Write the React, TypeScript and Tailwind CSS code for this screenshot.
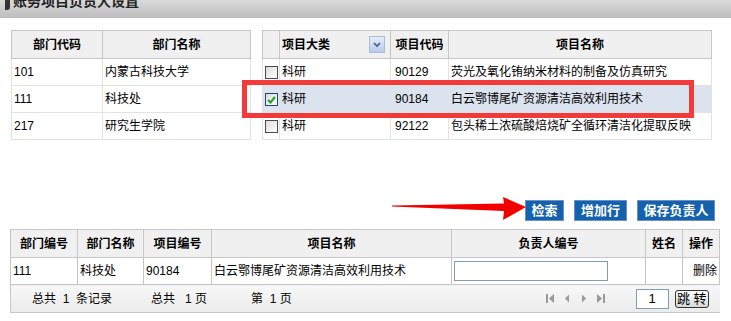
import React from "react"

const font = { fontFamily: '"Liberation Sans", "Noto Sans CJK SC", sans-serif' }

const Checkbox = ({ checked }: { checked?: boolean }) => (
  <span
    className={
      "inline-flex w-[13px] h-[13px] items-center justify-center border bg-gradient-to-br from-[#dcdcdc] to-white align-middle " +
      (checked ? "border-[#1c4a72]" : "border-[#4a4a4a]")
    }
  >
    {checked && (
      <svg width="9" height="8" viewBox="0 0 9 8">
        <path d="M1 4 L3.5 6.5 L8 1" stroke="#21a121" strokeWidth="2" fill="none" />
      </svg>
    )}
  </span>
)

const NavIcon = ({ kind }: { kind: "first" | "prev" | "next" | "last" }) => (
  <svg width="8" height="9" viewBox="0 0 8 9" className="text-[#9a9a9a]">
    {kind === "first" && (
      <>
        <rect x="0" y="0" width="2" height="9" fill="currentColor" />
        <path d="M8 0 L3 4.5 L8 9 Z" fill="currentColor" />
      </>
    )}
    {kind === "prev" && <path d="M6 0.5 L2 4.5 L6 8.5 Z" fill="currentColor" />}
    {kind === "next" && <path d="M2 0.5 L6 4.5 L2 8.5 Z" fill="currentColor" />}
    {kind === "last" && (
      <>
        <path d="M0 0 L5 4.5 L0 9 Z" fill="currentColor" />
        <rect x="6" y="0" width="2" height="9" fill="currentColor" />
      </>
    )}
  </svg>
)

const deptRows = [
  ["101", "内蒙古科技大学"],
  ["111", "科技处"],
  ["217", "研究生学院"],
]

const projRows = [
  { type: "科研", code: "90129", name: "荧光及氧化铕纳米材料的制备及仿真研究", checked: false },
  { type: "科研", code: "90184", name: "白云鄂博尾矿资源清洁高效利用技术", checked: true },
  { type: "科研", code: "92122", name: "包头稀土浓硫酸焙烧矿全循环清洁化提取反映", checked: false },
]

const th = "border border-[#c6c6c6] bg-[#f0f0f0] font-bold text-center px-[2px]"
const td = "border border-[#e2e2e2] px-[2px] whitespace-nowrap overflow-hidden"
const tdB = "border border-[#c6c6c6] px-[2px] whitespace-nowrap overflow-hidden"

export default function App() {
  return (
    <div className="relative w-[731px] h-[321px] bg-white text-[12px] text-black overflow-hidden" style={font}>
      {/* title bar, scrolled so the text is cut off */}
      <div className="h-[18px] bg-gradient-to-b from-[#dadada] to-[#bdbdbd] overflow-hidden flex items-start pl-[5px]">
        <div className="flex items-center gap-[3px] -mt-[9px]">
          <span className="w-[5px] h-[12px] bg-[#333] rounded-r-[3px] mt-[4px]" />
          <span className="text-[14px] font-bold text-[#222]">账务项目负责人设置</span>
        </div>
      </div>

      {/* top tables */}
      <div className="flex items-start gap-[11px] mt-[12px] pl-[11px]">
        <table className="border-collapse table-fixed w-[239px]">
          <colgroup>
            <col className="w-[91px]" />
            <col className="w-[148px]" />
          </colgroup>
          <thead>
            <tr className="h-[28px]">
              <th className={th}>部门代码</th>
              <th className={th}>部门名称</th>
            </tr>
          </thead>
          <tbody>
            {deptRows.map(r => (
              <tr key={r[0]} className="h-[27px]">
                <td className={td}>{r[0]}</td>
                <td className={td}>{r[1]}</td>
              </tr>
            ))}
          </tbody>
        </table>

        <table className="border-collapse table-fixed w-[449px]">
          <colgroup>
            <col className="w-[17px]" />
            <col className="w-[111px]" />
            <col className="w-[58px]" />
            <col className="w-[263px]" />
          </colgroup>
          <thead>
            <tr className="h-[28px]">
              <th className={th}></th>
              <th className={th + " text-left"}>
                <div className="flex items-center justify-between pr-[3px]">
                  <span>项目大类</span>
                  <span className="w-[16px] h-[17px] border border-[#a9bcd6] bg-gradient-to-b from-[#e4ecf8] to-[#b9cbea] flex items-center justify-center">
                    <svg width="8" height="6" viewBox="0 0 8 6">
                      <path d="M1 1 L4 4 L7 1" stroke="#3b5c8c" strokeWidth="1.6" fill="none" />
                    </svg>
                  </span>
                </div>
              </th>
              <th className={th}>项目代码</th>
              <th className={th}>项目名称</th>
            </tr>
          </thead>
          <tbody>
            {projRows.map(r => (
              <tr key={r.code} className={"h-[27px] " + (r.checked ? "bg-[#dbe3ee]" : "")}>
                <td className={td + " px-0 text-center"}>
                  <Checkbox checked={r.checked} />
                </td>
                <td className={td}>{r.type}</td>
                <td className={td + " pl-[4px]"}>{r.code}</td>
                <td className={td}>{r.name}</td>
              </tr>
            ))}
          </tbody>
        </table>
      </div>

      {/* buttons row */}
      <div className="flex justify-end items-center gap-[10px] mt-[60px] pr-[16px]">
        <button className="w-[39px] h-[21px] bg-[#1462ad] border border-[#6d8fc4] text-white font-bold text-[13px] leading-none">检索</button>
        <button className="w-[53px] h-[21px] bg-[#1462ad] border border-[#6d8fc4] text-white font-bold text-[13px] leading-none">增加行</button>
        <button className="w-[78px] h-[21px] bg-[#1462ad] border border-[#6d8fc4] text-white font-bold text-[13px] leading-none">保存负责人</button>
      </div>

      {/* bottom table */}
      <div className="pl-[10px] mt-[8px]">
        <table className="border-collapse table-fixed w-[709px]">
          <colgroup>
            <col className="w-[67px]" />
            <col className="w-[66px]" />
            <col className="w-[68px]" />
            <col className="w-[240px]" />
            <col className="w-[194px]" />
            <col className="w-[37px]" />
            <col className="w-[37px]" />
          </colgroup>
          <thead>
            <tr className="h-[28px]">
              <th className={th}>部门编号</th>
              <th className={th}>部门名称</th>
              <th className={th}>项目编号</th>
              <th className={th}>项目名称</th>
              <th className={th}>负责人编号</th>
              <th className={th}>姓名</th>
              <th className={th}>操作</th>
            </tr>
          </thead>
          <tbody>
            <tr className="h-[27px]">
              <td className={tdB}>111</td>
              <td className={tdB}>科技处</td>
              <td className={tdB}>90184</td>
              <td className={tdB}>白云鄂博尾矿资源清洁高效利用技术</td>
              <td className={tdB}>
                <input className="block w-[154px] h-[20px] border border-[#7f9db9] bg-white outline-none" />
              </td>
              <td className={tdB}></td>
              <td className={tdB + " text-right"}>删除</td>
            </tr>
            <tr className="h-[28px]">
              <td colSpan={7} className="border border-[#c6c6c6] border-r-0 bg-gradient-to-b from-[#f8f8f8] to-[#ebebeb] p-0">
                <div className="flex items-center h-[27px] whitespace-pre">
                  <span className="ml-[21px] w-[119px]">总共  1  条记录</span>
                  <span className="w-[100px]">总共   1 页</span>
                  <span>第  1 页</span>
                  <div className="flex items-center gap-[9px] ml-[254px]">
                    <NavIcon kind="first" />
                    <NavIcon kind="prev" />
                    <NavIcon kind="next" />
                    <NavIcon kind="last" />
                  </div>
                  <input
                    readOnly
                    value="1"
                    className="ml-[31px] w-[33px] h-[20px] border border-[#7f9db9] bg-white text-center text-[13px] outline-none"
                    style={font}
                  />
                  <button className="ml-[6px] w-[34px] h-[18px] border border-[#333] rounded-[3px] bg-gradient-to-b from-white to-[#d8d8d8] text-[13px] leading-none">
                    跳 转
                  </button>
                </div>
              </td>
            </tr>
          </tbody>
        </table>
      </div>

      {/* annotation: red box */}
      <div className="absolute left-[242px] top-[80px] w-[452px] h-[38px] border-[5px] border-[#f23a3a] pointer-events-none" />

      {/* annotation: red arrow */}
      <svg className="absolute left-[390px] top-[196px]" width="138" height="26" viewBox="0 0 138 26">
        <path d="M2 9.5 L114 7.5 L113 1 L136 11 L113 24 L114 15 L2 10.5 Z" fill="#f20000" />
      </svg>
    </div>
  )
}
